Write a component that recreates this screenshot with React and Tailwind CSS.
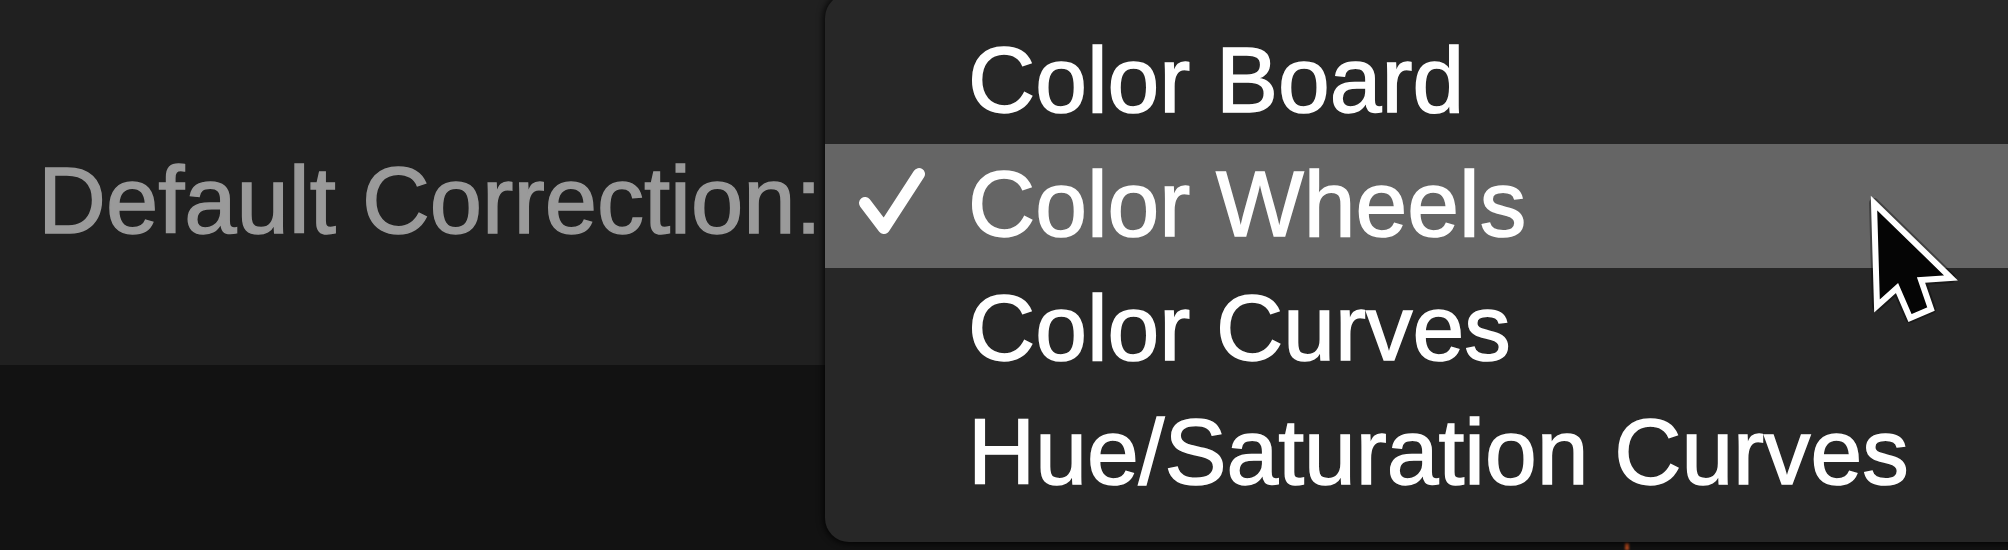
import React from "react";

const items = ["Color Board", "Color Wheels", "Color Curves", "Hue/Saturation Curves"];

function Check() {
  return (
    <svg width="68" height="124" viewBox="0 0 68 124" className="shrink-0">
      <polyline
        points="7,59 26,84 61,30"
        fill="none"
        stroke="#ffffff"
        strokeWidth="12"
        strokeLinecap="round"
        strokeLinejoin="round"
      />
    </svg>
  );
}

function Cursor() {
  return (
    <svg
      width="100"
      height="140"
      viewBox="1862 190 100 140"
      className="absolute left-[1862px] top-[190px]"
    >
      <polygon
        points="1874,203 1877,306 1897,288 1910,318 1931,309 1921,280 1951,278"
        fill="#000000"
        stroke="#000000"
        strokeWidth="10"
        strokeLinejoin="round"
        opacity="0.35"
      />
      <polygon
        points="1874,203 1877,306 1897,288 1910,318 1931,309 1921,280 1951,278"
        fill="#050505"
        stroke="#ffffff"
        strokeWidth="6"
        strokeLinejoin="miter"
      />
    </svg>
  );
}

export default function App() {
  return (
    <div
      className="relative w-[2008px] h-[550px] overflow-hidden flex flex-col bg-[#121212]"
      style={{ fontFamily: '"Liberation Sans", Arial, sans-serif' }}
    >
      <div className="h-[365px] shrink-0 bg-[#202020] pl-[38px] pt-[139px]">
        <div className="text-[94px] leading-[124px] text-[#9a9a9a] whitespace-nowrap [-webkit-text-stroke:1.5px_#9a9a9a]">
          Default Correction:
        </div>
      </div>
      <div className="flex-1 bg-[#121212]" />

      <div className="absolute left-[1625px] top-[543px] w-[4px] h-[7px] bg-[#b4481c] blur-[1px]" />

      <div className="absolute left-[825px] top-[-6px] w-[1250px] h-[548px] rounded-[24px] bg-[#272727] shadow-[0_0_6px_2px_rgba(0,0,0,0.75)] pt-[26px] pb-[26px] flex flex-col">
        {items.map((label, i) => (
          <div
            key={label}
            className={
              i === 1
                ? "h-[124px] flex items-start pl-[33px] bg-[#656565]"
                : "h-[124px] flex items-start pl-[33px]"
            }
          >
            {i === 1 ? <Check /> : <div className="w-[68px] shrink-0" />}
            <div className="ml-[42px] text-[93px] leading-[120px] text-white whitespace-nowrap [-webkit-text-stroke:1.5px_#ffffff]">
              {label}
            </div>
          </div>
        ))}
      </div>

      <Cursor />
    </div>
  );
}
